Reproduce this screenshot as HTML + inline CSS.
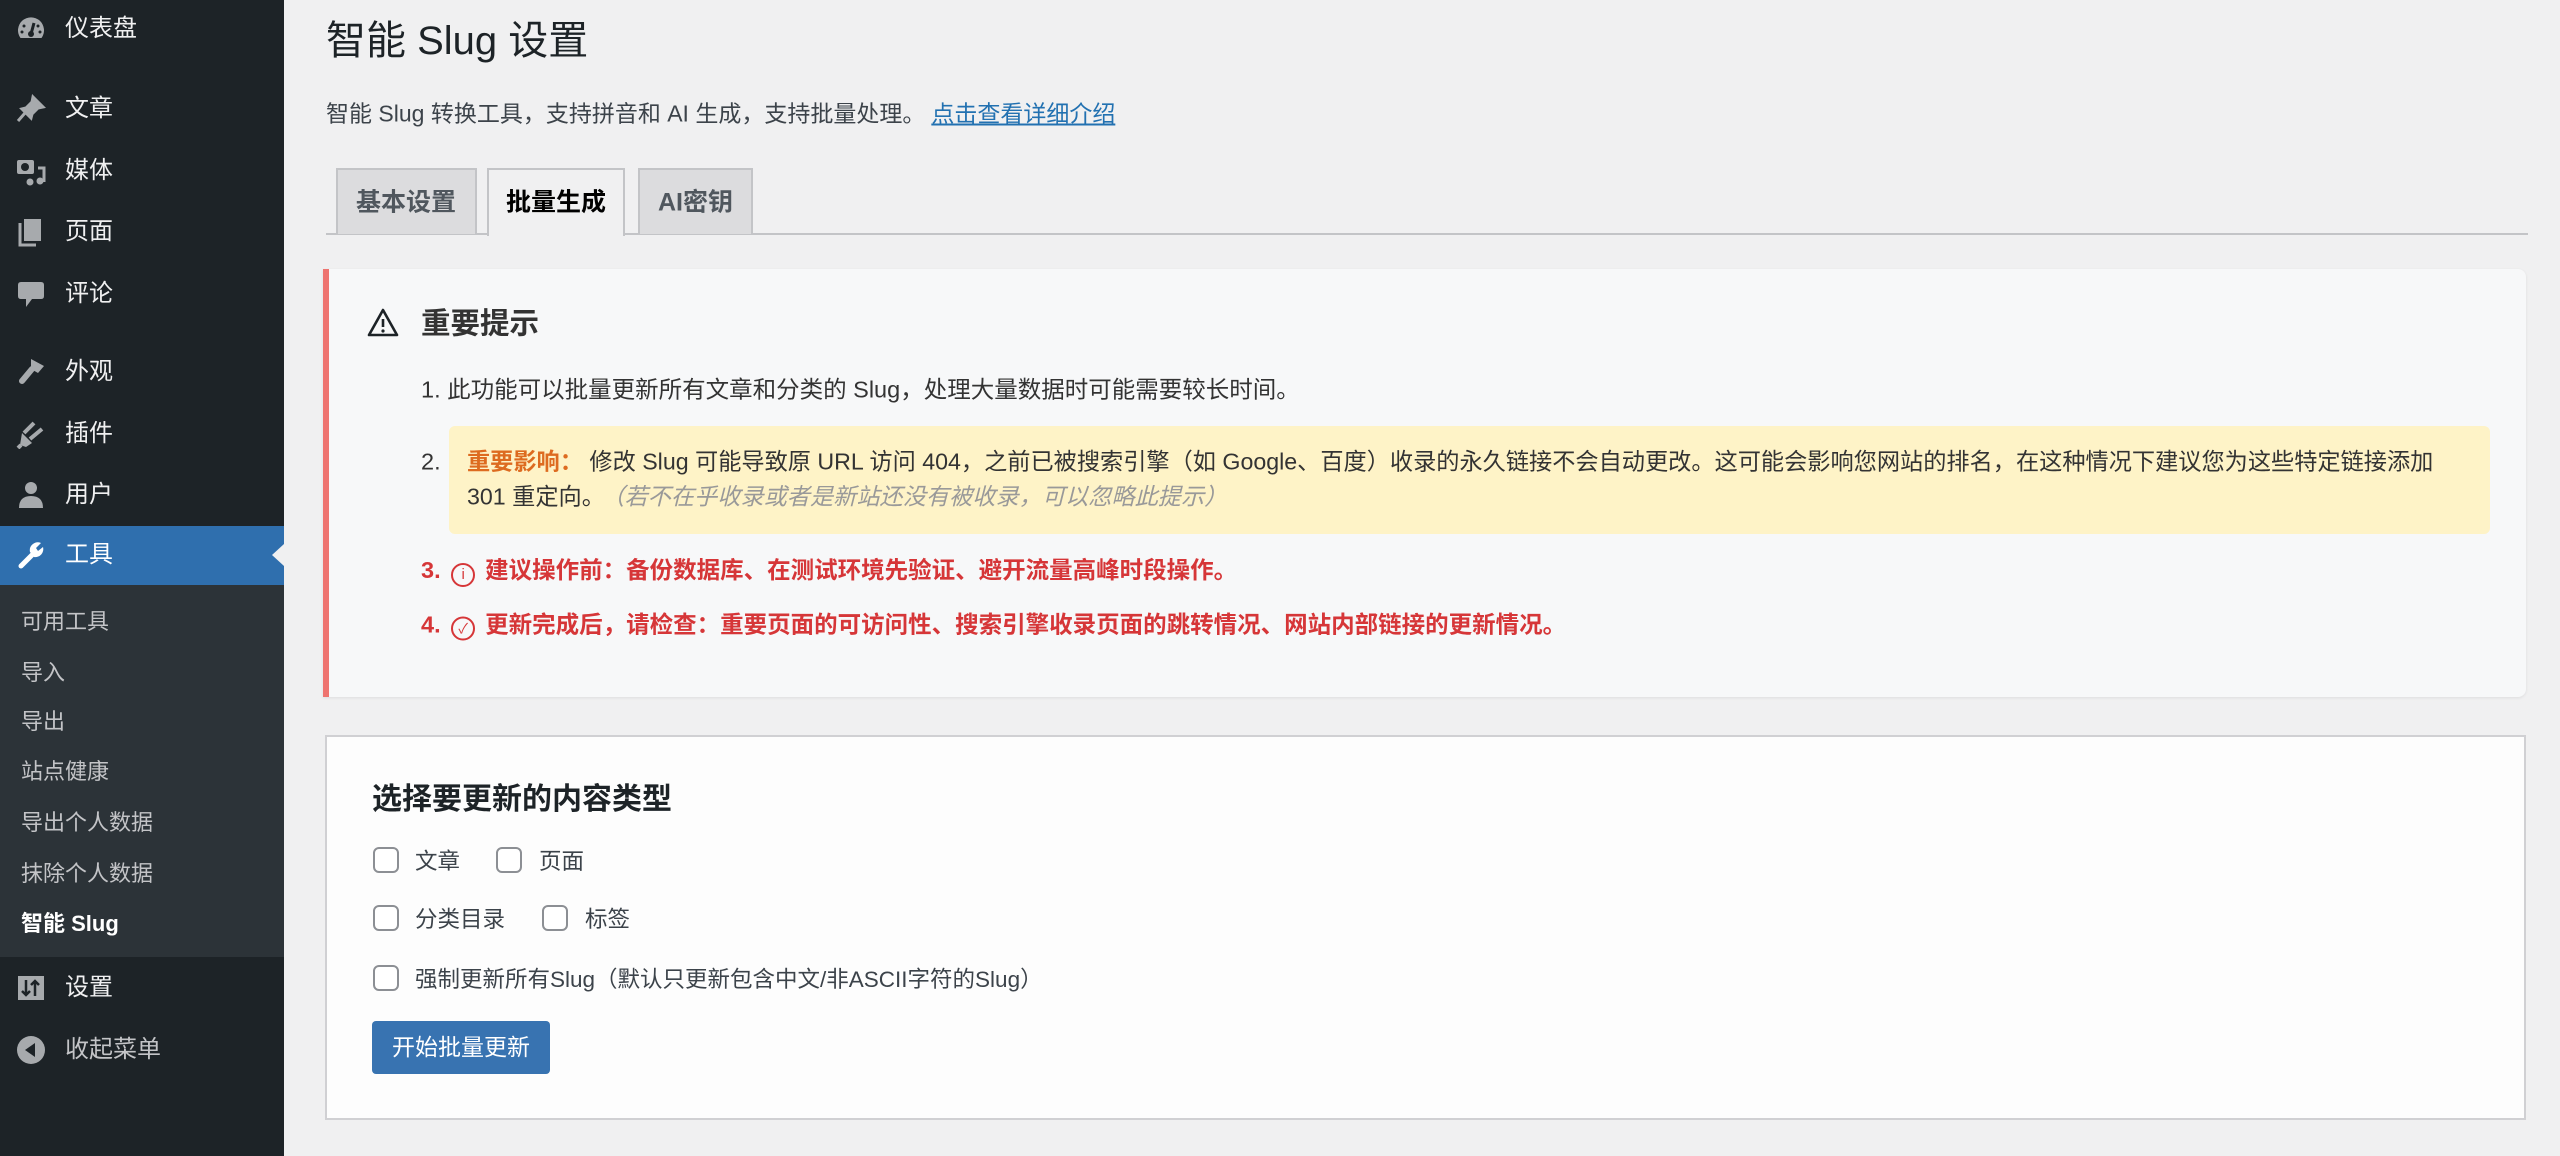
<!DOCTYPE html>
<html><head><meta charset="utf-8">
<style>
*{margin:0;padding:0;box-sizing:border-box}
body{width:2560px;height:1156px;background:#f0f0f1;font-family:"Liberation Sans","Noto Sans CJK SC",sans-serif;color:#3c434a;position:relative;overflow:hidden}
.abs{position:absolute;white-space:nowrap}
#side{position:absolute;left:0;top:0;width:284px;height:1156px;background:#1d2327}
.mi{position:absolute;left:65px;font-size:24px;color:#f0f0f1;line-height:30px;transform:translateY(-15px)}
.ic{position:absolute;left:16px;width:30px;height:30px;transform:translateY(-15px)}
.sm{position:absolute;left:21px;font-size:22px;color:#c3c4c7;line-height:28px;transform:translateY(-14px)}
.t{line-height:1;transform:translateY(-50%)}
.cb{position:absolute;width:26px;height:26px;border:2px solid #8c8f94;border-radius:6px;background:#fff;transform:translateY(-50%)}
.lb{position:absolute;font-size:22.5px;color:#3c434a;transform:translateY(-50%);white-space:nowrap}
.ci{display:inline-block;width:24px;height:24px;border:2px solid #d63638;border-radius:50%;text-align:center;line-height:20px;vertical-align:-1px;margin:0 10px 0 4px;font-weight:normal}
</style></head><body>
<div id="side">
  <svg class="ic" style="top:29px" viewBox="0 0 30 30"><path d="M4.5 24 A13 13 0 1 1 25.5 24 Z" fill="#a7aaad"/><path d="M15 20 L18 9" stroke="#1d2327" stroke-width="3"/><circle cx="15" cy="20" r="3" fill="#1d2327"/><circle cx="8" cy="12" r="1.5" fill="#1d2327"/><circle cx="22" cy="12" r="1.5" fill="#1d2327"/><circle cx="6" cy="18" r="1.5" fill="#1d2327"/><circle cx="24" cy="18" r="1.5" fill="#1d2327"/></svg>
  <div class="mi" style="top:29px">仪表盘</div>
  <svg class="ic" style="top:109px" viewBox="0 0 30 30"><path d="M17 3 L27 13 L22 14 L16 20 L15 24 L6 15 L10 14 L16 8 Z M9 19 L2 27" stroke="#a7aaad" stroke-width="3" fill="#a7aaad"/></svg>
  <div class="mi" style="top:109px">文章</div>
  <svg class="ic" style="top:171px" viewBox="0 0 30 30"><rect x="1" y="4" width="17" height="14" rx="2" fill="#a7aaad"/><circle cx="9" cy="11" r="4" fill="#1d2327"/><path d="M22 12 H28 V26" stroke="#a7aaad" stroke-width="3" fill="none"/><circle cx="24" cy="25" r="3.5" fill="#a7aaad"/><circle cx="14" cy="26" r="3.5" fill="#a7aaad"/></svg>
  <div class="mi" style="top:171px">媒体</div>
  <svg class="ic" style="top:232px" viewBox="0 0 30 30"><path d="M4 6 V28 H20" stroke="#a7aaad" stroke-width="3" fill="none"/><rect x="8" y="2" width="17" height="22" fill="#a7aaad"/></svg>
  <div class="mi" style="top:232px">页面</div>
  <svg class="ic" style="top:294px" viewBox="0 0 30 30"><path d="M5 3 H25 Q28 3 28 6 V17 Q28 20 25 20 H16 L10 28 V20 H5 Q2 20 2 17 V6 Q2 3 5 3Z" fill="#a7aaad"/></svg>
  <div class="mi" style="top:294px">评论</div>
  <svg class="ic" style="top:372px" viewBox="0 0 30 30"><path d="M15 2 L28 9 L22 16 L15 12 Z" fill="#a7aaad"/><path d="M16 12 L6 24" stroke="#a7aaad" stroke-width="6" stroke-linecap="round"/></svg>
  <div class="mi" style="top:372px">外观</div>
  <svg class="ic" style="top:434px" viewBox="0 0 30 30"><path d="M6 14 L16 24 L10 28 L4 26 Z" fill="#a7aaad"/><path d="M8 14 L18 4 M14 20 L26 10 M5 26 L2 29" stroke="#a7aaad" stroke-width="4"/></svg>
  <div class="mi" style="top:434px">插件</div>
  <svg class="ic" style="top:495px" viewBox="0 0 30 30"><circle cx="15" cy="8" r="6" fill="#a7aaad"/><path d="M3 28 Q3 16 15 16 Q27 16 27 28 Z" fill="#a7aaad"/></svg>
  <div class="mi" style="top:495px">用户</div>
  <div style="position:absolute;left:0;top:526px;width:284px;height:59px;background:#2f6fae"></div>
  <div style="position:absolute;left:272px;top:544px;width:0;height:0;border-top:11px solid transparent;border-bottom:11px solid transparent;border-right:12px solid #f0f0f1"></div>
  <svg class="ic" style="top:555px" viewBox="0 0 30 30"><path d="M5 26 L16 15" stroke="#fff" stroke-width="5" stroke-linecap="round"/><path d="M14 12 A8 8 0 0 1 25 3 L20 8 L22 11 L27 7 A8 8 0 0 1 18 17 Z" fill="#fff"/></svg>
  <div class="mi" style="top:555px;color:#fff">工具</div>
  <div style="position:absolute;left:0;top:585px;width:284px;height:372px;background:#2c3338"></div>
  <div class="sm" style="top:622px">可用工具</div>
  <div class="sm" style="top:673px">导入</div>
  <div class="sm" style="top:722px">导出</div>
  <div class="sm" style="top:772px">站点健康</div>
  <div class="sm" style="top:823px">导出个人数据</div>
  <div class="sm" style="top:874px">抹除个人数据</div>
  <div class="sm" style="top:924px;color:#fff;font-weight:bold">智能 Slug</div>
  <svg class="ic" style="top:988px" viewBox="0 0 30 30"><rect x="2" y="3" width="26" height="24" fill="#a7aaad"/><path d="M10 7 V22 M6 18 L10 22 L14 18 M19 23 V8 M15 12 L19 8 L23 12" stroke="#1d2327" stroke-width="2.5" fill="none"/></svg>
  <div class="mi" style="top:988px">设置</div>
  <svg class="ic" style="top:1050px" viewBox="0 0 30 30"><circle cx="15" cy="15" r="14" fill="#a7aaad"/><path d="M19 8 L9 15 L19 22 Z" fill="#1d2327"/></svg>
  <div class="mi" style="top:1050px;color:#c3c4c7">收起菜单</div>
</div>

<div class="abs t" style="left:326px;top:41px;font-size:40px;color:#1d2327">智能 Slug 设置</div>
<div class="abs t" style="left:326px;top:114px;font-size:23px;color:#3c434a">智能 Slug 转换工具，支持拼音和 AI 生成，支持批量处理。<span style="color:#2271b1;text-decoration:underline;margin-left:6px">点击查看详细介绍</span></div>

<div style="position:absolute;left:326px;top:233px;width:2202px;height:2px;background:#c3c4c7"></div>
<div style="position:absolute;left:336px;top:168px;width:141px;height:66px;background:#dcdcde;border:2px solid #c3c4c7;border-bottom:none"></div>
<div class="abs t" style="left:356px;top:203px;font-size:25px;font-weight:bold;color:#50575e">基本设置</div>
<div style="position:absolute;left:487px;top:168px;width:138px;height:68px;background:#f0f0f1;border:2px solid #c3c4c7;border-bottom:none"></div>
<div class="abs t" style="left:506px;top:203px;font-size:25px;font-weight:bold;color:#000">批量生成</div>
<div style="position:absolute;left:638px;top:168px;width:115px;height:66px;background:#dcdcde;border:2px solid #c3c4c7;border-bottom:none"></div>
<div class="abs t" style="left:658px;top:203px;font-size:25px;font-weight:bold;color:#50575e">AI密钥</div>

<div style="position:absolute;left:323px;top:269px;width:2203px;height:428px;background:#f7f8f9;border-left:6px solid #ee7470;border-radius:0 8px 8px 0;box-shadow:0 1px 3px rgba(0,0,0,.08)"></div>
<svg style="position:absolute;left:367px;top:307px" width="32" height="32" viewBox="0 0 32 32"><path d="M16 3 L30 28 H2 Z" fill="none" stroke="#1d2327" stroke-width="2.6" stroke-linejoin="round"/><path d="M16 12 V20" stroke="#1d2327" stroke-width="2.6"/><circle cx="16" cy="24" r="1.6" fill="#1d2327"/></svg>
<div class="abs t" style="left:421px;top:324px;font-size:29.5px;font-weight:bold;color:#333">重要提示</div>
<div class="abs t" style="left:421px;top:390px;font-size:23.5px;color:#333">1. 此功能可以批量更新所有文章和分类的 Slug，处理大量数据时可能需要较长时间。</div>
<div style="position:absolute;left:449px;top:426px;width:2041px;height:108px;background:#fef3c7;border-radius:6px"></div>
<div class="abs t" style="left:421px;top:462px;font-size:23.5px;color:#333">2.</div>
<div class="abs t" style="left:467px;top:462px;font-size:23.2px;color:#333"><b style="color:#dd6b20">重要影响：</b> 修改 Slug 可能导致原 URL 访问 404，之前已被搜索引擎（如 Google、百度）收录的永久链接不会自动更改。这可能会影响您网站的排名，在这种情况下建议您为这些特定链接添加</div>
<div class="abs t" style="left:467px;top:497px;font-size:23.2px;color:#333">301 重定向。<i style="color:#999;margin-left:8px">（若不在乎收录或者是新站还没有被收录，可以忽略此提示）</i></div>
<div class="abs t" style="left:421px;top:573px;font-size:23.5px;color:#d63638;font-weight:bold">3. <span class="ci" style="font-size:15px">i</span>建议操作前：备份数据库、在测试环境先验证、避开流量高峰时段操作。</div>
<div class="abs t" style="left:421px;top:627px;font-size:23.5px;color:#d63638;font-weight:bold">4. <span class="ci" style="font-size:14px">✓</span>更新完成后，请检查：重要页面的可访问性、搜索引擎收录页面的跳转情况、网站内部链接的更新情况。</div>

<div style="position:absolute;left:325px;top:735px;width:2201px;height:385px;background:#fdfdfd;border:2px solid #d0d0d3"></div>
<div class="abs t" style="left:372px;top:800px;font-size:30px;font-weight:bold;color:#1d2327">选择要更新的内容类型</div>
<div class="cb" style="left:373px;top:860px"></div><div class="lb" style="left:415px;top:860px">文章</div>
<div class="cb" style="left:496px;top:860px"></div><div class="lb" style="left:539px;top:860px">页面</div>
<div class="cb" style="left:373px;top:918px"></div><div class="lb" style="left:415px;top:918px">分类目录</div>
<div class="cb" style="left:542px;top:918px"></div><div class="lb" style="left:585px;top:918px">标签</div>
<div class="cb" style="left:373px;top:978px"></div><div class="lb" style="left:415px;top:978px">强制更新所有Slug（默认只更新包含中文/非ASCII字符的Slug）</div>
<div style="position:absolute;left:372px;top:1021px;width:178px;height:53px;background:#3873b1;border-radius:4px;color:#fff;font-size:23px;text-align:center;line-height:53px">开始批量更新</div>
</body></html>
